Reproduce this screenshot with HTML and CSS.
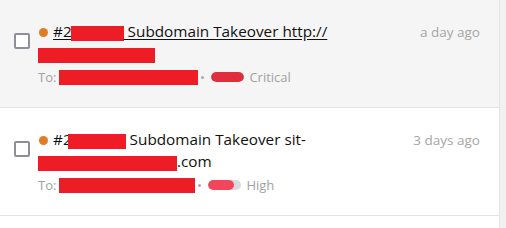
FILE: index.html
```html
<!DOCTYPE html>
<html lang="en">
<head>
<meta charset="utf-8">
<title>Reports</title>
<link rel="stylesheet" href="styles.css">
</head>
<body>
<div class="page">
  <ul class="list">
    <li class="row row-hover">
      <span class="checkbox"></span>
      <div class="content">
        <div class="title"><span class="dot"></span><a class="link" href="#">#2<span class="redact r-id1"></span> Subdomain Takeover http://<wbr><span class="redact r-url1"></span></a></div>
        <div class="meta">
          <span class="to">To:</span>
          <span class="redact r-to1"></span>
          <span class="sep"></span>
          <span class="sev"><span class="sev-fill sev-crit"></span></span>
          <span class="sev-label">Critical</span>
        </div>
      </div>
      <div class="date">a day ago</div>
    </li>
    <li class="row">
      <span class="checkbox"></span>
      <div class="content">
        <div class="title"><span class="dot"></span><span class="plain">#2<span class="redact r-id2"></span> Subdomain Takeover sit-<wbr><span class="redact r-url2"></span>.com</span></div>
        <div class="meta">
          <span class="to">To:</span>
          <span class="redact r-to2"></span>
          <span class="sep"></span>
          <span class="sev"><span class="sev-fill sev-high"></span></span>
          <span class="sev-label">High</span>
        </div>
      </div>
      <div class="date">3 days ago</div>
    </li>
  </ul>
  <div class="track"></div>
</div>
</body>
</html>
```

FILE: styles.css
```css
html, body {
  margin: 0;
  padding: 0;
  background: #ffffff;
}
body {
  font-family: "Open Sans", "Liberation Sans", sans-serif;
  color: #1a1a1a;
}
.page {
  display: flex;
  width: 506px;
  height: 228px;
  overflow: hidden;
}
.list {
  list-style: none;
  margin: 0;
  padding: 0;
  flex: 1;
}
.track {
  width: 6px;
  background: #f1f1f1;
  border-left: 1px solid #e4e4e4;
}
.row {
  display: flex;
  align-items: flex-start;
  padding: 20px 19px 19px 14px;
  border-bottom: 1px solid #e3e3e3;
  background: #ffffff;
}
.row-hover {
  background: #f5f5f5;
}
.checkbox {
  flex: none;
  box-sizing: border-box;
  width: 16px;
  height: 16px;
  margin-top: 13px;
  margin-right: 8px;
  border: 2px solid #8f8f9c;
  border-radius: 2px;
  background: #ffffff;
}
.content {
  flex: 1;
  min-width: 0;
  padding-right: 60px;
}
.title {
  font-size: 15.3px;
  line-height: 22px;
  color: #111111;
}
.link {
  color: #111111;
  text-decoration: underline;
  text-underline-offset: 2px;
}
.plain {
  color: #111111;
}
.dot {
  display: inline-block;
  width: 9px;
  height: 9px;
  border-radius: 50%;
  background: #e07c25;
  margin-left: 1px;
  margin-right: 5px;
  vertical-align: 0;
}
.redact {
  display: inline-block;
  background: #ee1c25;
  vertical-align: -4px;
}
.title .redact {
  height: 15px;
}
.r-id1 { width: 53px; margin-left: -1px; }
.r-id2 { width: 58px; margin-left: -4px; }
.r-url1 { width: 117px; }
.r-url2 { width: 139px; }
.meta {
  display: flex;
  align-items: center;
  margin-top: 2px;
  height: 22px;
  font-size: 13px;
  color: #a2a2a2;
}
.to {
  margin-right: 3px;
}
.meta .redact {
  height: 15px;
}
.r-to1 { width: 139px; }
.r-to2 { width: 136px; }
.sep {
  width: 3px;
  height: 3px;
  background: #a9a9a9;
  border-radius: 50%;
  margin: 0 7px 0 3px;
}
.sev {
  display: inline-flex;
  width: 33px;
  height: 10px;
  border-radius: 5px;
  background: #dadadf;
  overflow: hidden;
  margin-right: 5px;
}
.sev-fill {
  height: 100%;
  border-radius: 5px;
}
.sev-crit {
  width: 100%;
  background: #df2f3e;
}
.sev-high {
  width: 78%;
  background: #f2475a;
}
.date {
  flex: none;
  font-size: 13.5px;
  line-height: 22px;
  color: #a6a6a6;
  padding-top: 1px;
}
```
